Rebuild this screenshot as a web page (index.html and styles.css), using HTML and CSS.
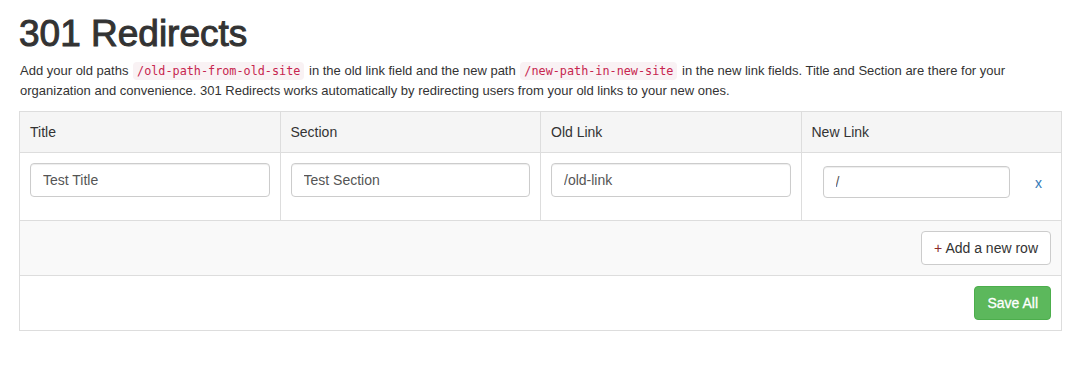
FILE: index.html
```html
<!DOCTYPE html>
<html>
<head>
<meta charset="utf-8">
<link rel="stylesheet" href="styles.css">
</head>
<body>
<div class="page">
  <h1 class="title">301 Redirects</h1>
  <p class="intro">Add your old paths <code>/old-path-from-old-site</code> in the old link field and the new path <code>/new-path-in-new-site</code> in the new link fields. Title and Section are there for your organization and convenience. 301 Redirects works automatically by redirecting users from your old links to your new ones.</p>
  <table class="redirects">
    <thead>
      <tr class="head-row">
        <th>Title</th>
        <th>Section</th>
        <th>Old Link</th>
        <th>New Link</th>
      </tr>
    </thead>
    <tbody>
      <tr class="entry-row">
        <td><div class="field"><input class="input" type="text" value="Test Title"></div></td>
        <td><div class="field"><input class="input" type="text" value="Test Section"></div></td>
        <td><div class="field"><input class="input" type="text" value="/old-link"></div></td>
        <td>
          <div class="field new-link">
            <input class="input input-new" type="text" value="/">
            <a class="remove" href="#">x</a>
          </div>
        </td>
      </tr>
      <tr class="add-row">
        <td colspan="4"><div class="actions"><button class="btn btn-default" type="button"><span class="plus">+</span> Add a new row</button></div></td>
      </tr>
      <tr class="save-row">
        <td colspan="4"><div class="actions"><button class="btn btn-success" type="button">Save All</button></div></td>
      </tr>
    </tbody>
  </table>
</div>
</body>
</html>
```

FILE: styles.css
```css
* { box-sizing: border-box; }

html, body {
  margin: 0;
  padding: 0;
  background: #fff;
}

body {
  font-family: "Liberation Sans", Arial, Helvetica, sans-serif;
  color: #333;
  font-size: 14px;
}

.page {
  padding: 0 10px 0 19px;
}

.title {
  font-size: 37px;
  font-weight: 500;
  line-height: 1.1;
  margin: 14px 0 6px 0;
  color: #333;
  -webkit-text-stroke: 1px #333;
}

.intro {
  font-size: 13px;
  line-height: 19px;
  margin: 0 0 11px 0;
  padding-left: 1px;
}

code {
  font-family: "DejaVu Sans Mono", Menlo, monospace;
  font-size: 11.8px;
  color: #c7254e;
  background: #f9f2f4;
  padding: 2px 4px;
  margin: 0 1px;
  border-radius: 4px;
}

.redirects {
  width: 1043px;
  border-collapse: collapse;
  table-layout: fixed;
  border: 1px solid #ddd;
}

.redirects th,
.redirects td {
  border: 1px solid #ddd;
  padding: 10px;
  text-align: left;
  vertical-align: top;
  line-height: 20px;
}

.redirects th {
  font-weight: normal;
  background: #f5f5f5;
}

.field {
  margin-bottom: 12px;
}

.input {
  display: block;
  width: 100%;
  height: 34px;
  padding: 6px 12px;
  font-family: "Liberation Sans", Arial, Helvetica, sans-serif;
  font-size: 14px;
  color: #555;
  background: #fff;
  border: 1px solid #ccc;
  border-radius: 4px;
  box-shadow: inset 0 1px 1px rgba(0, 0, 0, 0.075);
  outline: none;
}

.new-link {
  display: flex;
  align-items: center;
  gap: 25px;
  padding: 3px 9px 0 11px;
}

.input-new {
  flex: 1;
  width: auto;
  min-width: 0;
  height: 32px;
}

.remove {
  color: #337ab7;
  text-decoration: none;
  font-size: 14px;
  line-height: 20px;
  padding-top: 2px;
}

.add-row td {
  background: #f9f9f9;
}

.actions {
  display: flex;
  justify-content: flex-end;
}

.btn {
  display: inline-block;
  height: 34px;
  padding: 6px 12px;
  font-family: "Liberation Sans", Arial, Helvetica, sans-serif;
  font-size: 14px;
  line-height: 20px;
  border: 1px solid transparent;
  border-radius: 4px;
  cursor: pointer;
}

.btn-default {
  color: #333;
  background: #fff;
  border-color: #ccc;
}

.plus {
  color: #8b2a2a;
}

.btn-success {
  color: #fff;
  background: #5cb85c;
  border-color: #4cae4c;
  -webkit-text-stroke: 0.3px #fff;
}
```
